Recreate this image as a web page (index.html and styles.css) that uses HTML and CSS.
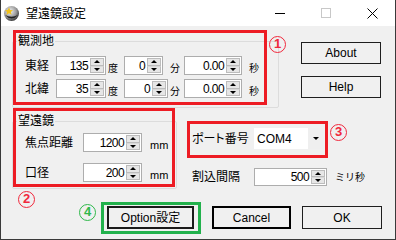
FILE: index.html
```html
<!DOCTYPE html>
<html lang="ja">
<head>
<meta charset="utf-8">
<title>望遠鏡設定</title>
<link rel="stylesheet" href="styles.css">
</head>
<body>
<div class="window">
  <div class="titlebar">
    <svg class="appicon" viewBox="0 0 17 17">
      <defs>
        <radialGradient id="ig" cx="40%" cy="35%" r="70%">
          <stop offset="0" stop-color="#f4f4f4"/>
          <stop offset=".6" stop-color="#9a9a9a"/>
          <stop offset="1" stop-color="#2a2a2a"/>
        </radialGradient>
      </defs>
      <circle cx="8.5" cy="8.5" r="7.5" fill="url(#ig)"/>
      <path d="M2 10 Q8.5 17 15 10 Q8.5 13.5 2 10Z" fill="#222"/>
      <path d="M6 2.5 L7.2 5.1 L10 5.3 L7.9 7.1 L8.6 9.8 L6 8.3 L3.4 9.8 L4.1 7.1 L2 5.3 L4.8 5.1Z" fill="#f2c21b"/>
    </svg>
    <span class="title">望遠鏡設定</span>
    <div class="caps">
      <span class="cap"><svg width="10" height="10" viewBox="0 0 10 10"><path d="M0 5.5H10" stroke="#000" stroke-width="1"/></svg></span>
      <span class="cap"><svg width="10" height="10" viewBox="0 0 10 10"><rect x=".5" y=".5" width="9" height="9" fill="none" stroke="#c8c8c8"/></svg></span>
      <span class="cap"><svg width="11" height="11" viewBox="0 0 11 11"><path d="M.5 .5L10.5 10.5M10.5 .5L.5 10.5" stroke="#000" stroke-width="1"/></svg></span>
    </div>
  </div>

  <div class="client">
    <div class="top">
      <fieldset class="group g-loc">
        <legend>観測地</legend>
        <div class="rows loc-rows">
          <div class="row">
            <span class="lbl lbl-loc">東経</span>
            <span class="num w-deg"><span class="val">135</span><span class="spin"><i class="up"></i><i class="dn"></i></span></span>
            <span class="unit u-deg">度</span>
            <span class="num w-min1"><span class="val">0</span><span class="spin"><i class="up"></i><i class="dn"></i></span></span>
            <span class="unit u-min1">分</span>
            <span class="num w-sec"><span class="val">0.00</span><span class="spin"><i class="up"></i><i class="dn"></i></span></span>
            <span class="unit u-sec">秒</span>
          </div>
          <div class="row">
            <span class="lbl lbl-loc">北緯</span>
            <span class="num w-deg"><span class="val">35</span><span class="spin"><i class="up"></i><i class="dn"></i></span></span>
            <span class="unit u-deg">度</span>
            <span class="num w-min2"><span class="val">0</span><span class="spin"><i class="up"></i><i class="dn"></i></span></span>
            <span class="unit u-min2">分</span>
            <span class="num w-sec"><span class="val">0.00</span><span class="spin"><i class="up"></i><i class="dn"></i></span></span>
            <span class="unit u-sec">秒</span>
          </div>
        </div>
      </fieldset>
      <div class="side">
        <span class="btn side-btn">About</span>
        <span class="btn side-btn">Help</span>
      </div>
    </div>

    <div class="mid">
      <fieldset class="group g-scope">
        <legend>望遠鏡</legend>
        <div class="rows scope-rows">
          <div class="row">
            <span class="lbl lbl-scope">焦点距離</span>
            <span class="num w-scope"><span class="val">1200</span><span class="spin"><i class="up"></i><i class="dn"></i></span></span>
            <span class="unit u-mm">mm</span>
          </div>
          <div class="row">
            <span class="lbl lbl-scope">口径</span>
            <span class="num w-scope"><span class="val">200</span><span class="spin"><i class="up"></i><i class="dn"></i></span></span>
            <span class="unit u-mm">mm</span>
          </div>
        </div>
      </fieldset>
      <div class="comm">
        <div class="row row-port">
          <span class="lbl lbl-comm lbl-port">ポート番号</span>
          <span class="combo"><span class="txt">COM4</span><span class="arrow"></span></span>
        </div>
        <div class="row row-int">
          <span class="lbl lbl-comm">割込間隔</span>
          <span class="num w-int"><span class="val">500</span><span class="spin"><i class="up"></i><i class="dn"></i></span></span>
          <span class="unit u-ms">ミリ秒</span>
        </div>
      </div>
    </div>

    <div class="bottom">
      <span class="btn btn-option">Option設定</span>
      <span class="btn btn-cancel">Cancel</span>
      <span class="btn btn-ok">OK</span>
    </div>
  </div>

  <div class="anno box-1"></div>
  <span class="mark mark-red mark-1">1</span>
  <div class="anno box-2"></div>
  <span class="mark mark-red mark-2">2</span>
  <div class="anno box-3"></div>
  <span class="mark mark-red mark-3">3</span>
  <div class="anno anno-green box-4"></div>
  <span class="mark mark-green mark-4">4</span>
</div>
</body>
</html>
```

FILE: styles.css
```css
* { box-sizing: border-box; }

body {
  margin: 0;
  background: #ffffff;
  font-family: "Liberation Sans", "Noto Sans CJK JP", sans-serif;
  font-size: 12px;
  color: #000;
}

.window {
  position: relative;
  width: 396px;
  height: 240px;
  border: 1px solid #3a3a3a;
  border-top: 0;
  background: #f0f0f0;
  display: flex;
  flex-direction: column;
  overflow: hidden;
}

/* title bar */
.titlebar {
  flex: none;
  height: 26px;
  background: #fff;
  display: flex;
  align-items: center;
}
.appicon { width: 17px; height: 17px; margin-left: 2px; flex: none; }
.title {
  margin-left: 6px;
  font-family: "Noto Sans CJK JP", sans-serif;
  font-size: 12px;
  line-height: 14px;
}
.caps { margin-left: auto; display: flex; height: 100%; }
.cap { width: 46px; display: flex; align-items: center; justify-content: center; }

/* client */
.client { flex: 1; display: flex; flex-direction: column; }
.top { display: flex; align-items: flex-start; }
.mid { display: flex; align-items: flex-start; margin-top: 6px; }

.group {
  margin: 0;
  padding: 0 0 0 4px;
  border: 1px solid #dcdcdc;
  border-radius: 2px;
  min-width: 0;
}
.group legend {
  padding: 0 1px;
  font-size: 12px;
  line-height: 14px;
}
.g-loc { margin: 8px 0 0 11px; width: 267px; padding-bottom: 9px; }
.g-scope { margin-left: 11px; width: 165px; padding-bottom: 6px; }

.rows { display: flex; flex-direction: column; padding-left: 8px; }
.loc-rows { padding-top: 8px; gap: 4px; }
.scope-rows { padding-top: 5px; gap: 11px; }

.row { display: flex; align-items: stretch; height: 19px; }
.lbl { flex: none; display: flex; align-items: center; font-size: 12px; line-height: 14px; }
.lbl-loc { width: 31px; }
.lbl-scope { width: 58px; }
.lbl-comm { width: 62px; }
.lbl-port { font-feature-settings: "palt"; }

/* numeric up-down */
.num {
  flex: none;
  display: flex;
  justify-content: flex-end;
  align-items: stretch;
  border: 1px solid #adadad;
  background: #fff;
  padding: 1px;
}
.val {
  align-self: center;
  padding-right: 1px;
  font-size: 12px;
  line-height: 14px;
  letter-spacing: -0.6px;
}
.spin { width: 14px; display: flex; flex-direction: column; margin-left: 1px; }
.spin i {
  flex: 1;
  background: #e6e6e6;
  border: 1px solid #bcbcbc;
  display: flex;
  align-items: center;
  justify-content: center;
}
.spin i + i { border-top-color: #d8d8d8; }
.spin .up::before {
  content: "";
  border-left: 3px solid transparent;
  border-right: 3px solid transparent;
  border-bottom: 3px solid #000;
}
.spin .dn::before {
  content: "";
  border-left: 3px solid transparent;
  border-right: 3px solid transparent;
  border-top: 3px solid #000;
}

.w-deg { width: 50px; }
.w-min1 { width: 39px; }
.w-min2 { width: 44px; }
.w-sec { width: 58px; }
.w-scope { width: 59px; }
.w-int { width: 73px; height: 18px; }

.unit {
  flex: none;
  display: flex;
  align-items: flex-end;
  padding-bottom: 2px;
  font-family: "Noto Sans CJK JP", sans-serif;
  font-size: 10px;
  line-height: 11px;
}
.u-deg { width: 18px; padding-left: 2px; }
.u-min1 { width: 21px; padding-left: 7px; }
.u-min2 { width: 16px; padding-left: 2px; }
.u-sec { padding-left: 7px; }
.u-mm { padding-left: 8px; font-family: "Liberation Sans", sans-serif; font-size: 11px; padding-bottom: 1px; }
.u-ms { padding-left: 8px; padding-bottom: 4px; }

/* side buttons */
.side { display: flex; flex-direction: column; gap: 12px; margin: 16px 0 0 22px; }
.btn {
  flex: none;
  display: flex;
  align-items: center;
  justify-content: center;
  height: 22px;
  border: 1px solid #1e1e1e;
  background: #f0f0f0;
  font-size: 12px;
  line-height: 14px;
}
.side-btn { width: 80px; }

/* communication */
.comm { display: flex; flex-direction: column; gap: 19px; margin-left: 15px; padding-top: 14px; }
.row-port { height: 21px; }
.row-int { height: 18px; }
.combo { width: 69px; background: #fff; display: flex; align-items: stretch; }
.combo .txt { flex: 1; display: flex; align-items: center; padding-left: 3px; }
.combo .arrow {
  width: 15px;
  background: #efefef;
  display: flex;
  align-items: center;
  justify-content: center;
}
.combo .arrow::before {
  content: "";
  border-left: 3px solid transparent;
  border-right: 3px solid transparent;
  border-top: 3px solid #000;
}

/* bottom buttons */
.bottom { display: flex; margin: 17px 0 0 106px; }
.bottom .btn { height: 23px; }
.btn-option { width: 87px; border: 2px solid #1a1a1a; }
.btn-cancel { width: 79px; margin-left: 18px; border: 2px solid #000; }
.btn-ok { width: 80px; margin-left: 11px; }

/* annotations */
.anno {
  position: absolute;
  border: 3px solid #ed1c24;
}
.anno-green { border-color: #22b14c; }
.box-1 { left: 12px; top: 30px; width: 254px; height: 75px; }
.box-2 { left: 12px; top: 108px; width: 162px; height: 79px; }
.box-3 { left: 186px; top: 121px; width: 141px; height: 37px; }
.box-4 { left: 100px; top: 202px; width: 100px; height: 32px; }

.mark {
  position: absolute;
  width: 17px;
  height: 17px;
  border-radius: 50%;
  border: 1.5px solid currentColor;
  font-family: "Liberation Sans", sans-serif;
  font-weight: bold;
  font-size: 13px;
  line-height: 14px;
  text-align: center;
}
.mark-red { color: #f0283c; }
.mark-green { color: #2fb84a; }
.mark-1 { left: 268px; top: 36px; }
.mark-2 { left: 17px; top: 191px; }
.mark-3 { left: 329px; top: 124px; }
.mark-4 { left: 78px; top: 204px; }
```
